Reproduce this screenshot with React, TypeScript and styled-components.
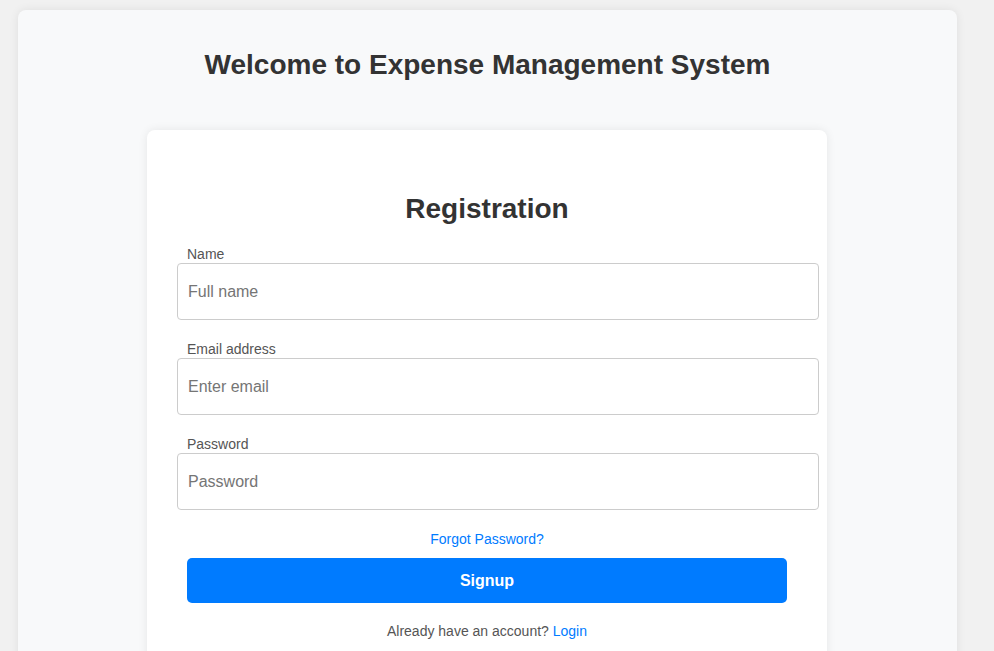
import React from "react";
import styled, { createGlobalStyle } from "styled-components";

const Global = createGlobalStyle`
  html, body { margin: 0; padding: 0; background: #f1f1f1; }
  body { font-family: "Liberation Sans", Arial, sans-serif; color: #333; }
  * { box-sizing: border-box; }
`;

const Page = styled.div`
  padding: 10px 0 0 18px;
  min-height: 651px;
`;

const Panel = styled.div`
  width: 939px;
  min-height: 700px;
  background: #f8f9fa;
  border-radius: 8px;
  box-shadow: 0 0 10px rgba(0, 0, 0, 0.08);
  padding-top: 20px;
  display: flex;
  flex-direction: column;
  align-items: flex-start;
`;

const Title = styled.h1`
  align-self: stretch;
  margin: 19px 0 49px;
  font-size: 28px;
  line-height: 32px;
  font-weight: 700;
  color: #333;
  text-align: center;
`;

const Card = styled.div`
  width: 680px;
  margin-left: 129px;
  background: #fff;
  border-radius: 8px;
  box-shadow: 0 0 10px rgba(0, 0, 0, 0.08);
  padding: 30px;
`;

const CardTitle = styled.h2`
  margin: 33px 0 21px;
  font-size: 28px;
  line-height: 32px;
  font-weight: 700;
  color: #333;
  text-align: center;
`;

const Group = styled.div`
  display: flex;
  flex-direction: column;
  margin-bottom: 21px;
`;

const Label = styled.label`
  font-size: 14px;
  line-height: 16px;
  color: #555;
  margin: 0 0 1px 10px;
`;

const Input = styled.input`
  width: 642px;
  height: 57px;
  padding: 0 10px;
  border: 1px solid #ccc;
  border-radius: 4px;
  font-family: "Liberation Sans", Arial, sans-serif;
  font-size: 16px;
  color: #333;
  background: #fff;
  outline: none;
  &::placeholder { color: #757575; }
`;

const Forgot = styled.a`
  display: block;
  text-align: center;
  font-size: 14px;
  line-height: 16px;
  color: #007bff;
  text-decoration: none;
  margin-bottom: 11px;
`;

const Button = styled.button`
  display: block;
  width: 600px;
  height: 45px;
  margin: 0 10px;
  border: none;
  border-radius: 5px;
  background: #007bff;
  color: #fff;
  font-family: "Liberation Sans", Arial, sans-serif;
  font-size: 16px;
  font-weight: 700;
`;

const Footer = styled.p`
  margin: 20px 0 0;
  text-align: center;
  font-size: 14px;
  line-height: 16px;
  color: #555;
`;

const Link = styled.a`
  color: #007bff;
  text-decoration: none;
`;

export default function App() {
  return (
    <>
      <Global />
      <Page>
        <Panel>
          <Title>Welcome to Expense Management System</Title>
          <Card>
            <CardTitle>Registration</CardTitle>
            <Group>
              <Label>Name</Label>
              <Input placeholder="Full name" />
            </Group>
            <Group>
              <Label>Email address</Label>
              <Input placeholder="Enter email" />
            </Group>
            <Group>
              <Label>Password</Label>
              <Input type="password" placeholder="Password" />
            </Group>
            <Forgot href="#">Forgot Password?</Forgot>
            <Button>Signup</Button>
            <Footer>
              Already have an account? <Link href="#">Login</Link>
            </Footer>
          </Card>
        </Panel>
      </Page>
    </>
  );
}
